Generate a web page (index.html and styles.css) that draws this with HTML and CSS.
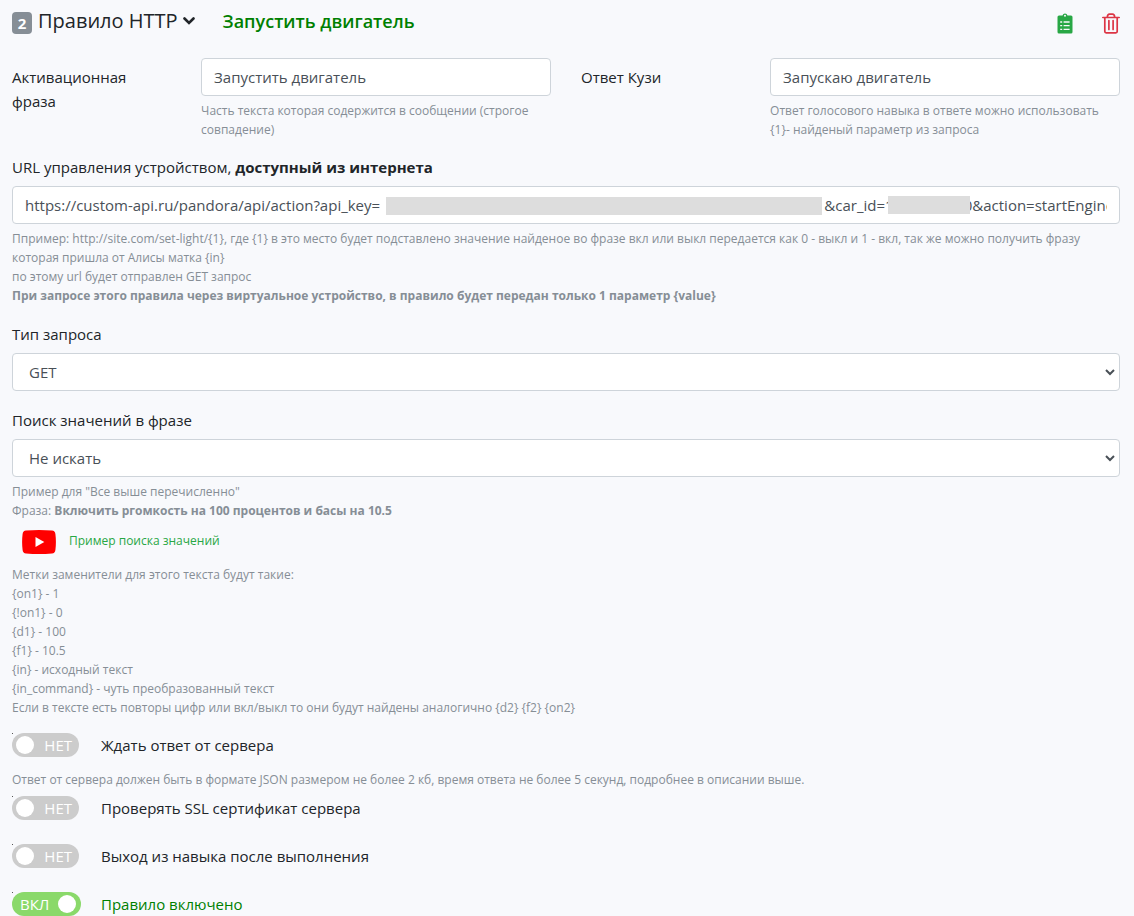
FILE: index.html
```html
<!DOCTYPE html>
<html lang="ru">
<head>
<meta charset="utf-8">
<meta name="viewport" content="width=device-width, initial-scale=1">
<title>Правило HTTP</title>
<link rel="stylesheet" href="styles.css">
</head>
<body>
<form class="rule">
  <header class="rule-head">
    <span class="badge">2</span>
    <button class="rule-type" type="button">Правило HTTP
      <svg width="12" height="8" viewBox="0 0 12 8"><path d="M1.5 1.5 6 6l4.500-4.500" fill="none" stroke="currentColor" stroke-width="2.600" stroke-linecap="round"/></svg>
    </button>
    <h2 class="rule-name">Запустить двигатель</h2>
    <button class="icon-btn copy" type="button" aria-label="Копировать">
      <svg width="16" height="21" viewBox="0 0 16 21"><path fill="currentColor" fill-rule="evenodd" d="M2 2.500h3.500a2.600 2.600 0 0 1 5 0H14a1.500 1.500 0 0 1 1.500 1.500v15a1.500 1.500 0 0 1-1.500 1.500H2A1.500 1.500 0 0 1 .5 19V4A1.500 1.500 0 0 1 2 2.500zM8 1.800a1 1 0 1 0 0 2 1 1 0 0 0 0-2z"/><path d="M3.200 9h2M6.600 9h6M3.200 12.700h2M6.600 12.700h6M3.200 16.400h2M6.600 16.400h6" stroke="#f8f9fa" stroke-width="1.300"/></svg>
    </button>
    <button class="icon-btn trash" type="button" aria-label="Удалить">
      <svg width="18" height="21" viewBox="0 0 18 21"><path d="M.8 4.500h16.400M2.800 4.500v14a1.300 1.300 0 0 0 1.300 1.300h9.800a1.300 1.300 0 0 0 1.300-1.300v-14M5.300 4.200C5.500 2 6.500 1.200 7.500 1.200h3c1 0 2 .8 2.200 3M6.900 7.500v9M11.100 7.500v9" fill="none" stroke="currentColor" stroke-width="1.700" stroke-linecap="round"/></svg>
    </button>
  </header>

  <div class="pair">
    <label class="side-label" for="phrase">Активационная фраза</label>
    <div>
      <input class="control" id="phrase" type="text" value="Запустить двигатель">
      <p class="help">Часть текста которая содержится в сообщении (строгое совпадение)</p>
    </div>
    <label class="side-label" for="answer">Ответ Кузи</label>
    <div>
      <input class="control" id="answer" type="text" value="Запускаю двигатель">
      <p class="help">Ответ голосового навыка в ответе можно использовать {1}- найденый параметр из запроса</p>
    </div>
  </div>

  <div class="group">
    <label for="url">URL управления устройством, <b>доступный из интернета</b></label>
    <div class="masked">
      <input class="control" id="url" type="text" value="https://custom-api.ru/pandora/api/action?api_key=&nbsp;&nbsp;&nbsp;&nbsp;&nbsp;&nbsp;&nbsp;&nbsp;&nbsp;&nbsp;&nbsp;&nbsp;&nbsp;&nbsp;&nbsp;&nbsp;&nbsp;&nbsp;&nbsp;&nbsp;&nbsp;&nbsp;&nbsp;&nbsp;&nbsp;&nbsp;&nbsp;&nbsp;&nbsp;&nbsp;&nbsp;&nbsp;&nbsp;&nbsp;&nbsp;&nbsp;&nbsp;&nbsp;&nbsp;&nbsp;&nbsp;&nbsp;&nbsp;&nbsp;&nbsp;&nbsp;&nbsp;&nbsp;&nbsp;&nbsp;&nbsp;&nbsp;&nbsp;&nbsp;&nbsp;&nbsp;&nbsp;&nbsp;&nbsp;&nbsp;&nbsp;&nbsp;&nbsp;&nbsp;&nbsp;&nbsp;&nbsp;&nbsp;&nbsp;&nbsp;&nbsp;&nbsp;&nbsp;&nbsp;&nbsp;&nbsp;&nbsp;&nbsp;&nbsp;&nbsp;&nbsp;&nbsp;&nbsp;&nbsp;&nbsp;&nbsp;&nbsp;&nbsp;&nbsp;&nbsp;&nbsp;&nbsp;&nbsp;&nbsp;&nbsp;&nbsp;&nbsp;&nbsp;&nbsp;&nbsp;&nbsp;&nbsp;&nbsp;&nbsp;&nbsp;&nbsp;&nbsp;&nbsp;&nbsp;&nbsp;&nbsp;&nbsp;&nbsp;&nbsp;&amp;car_id=1&nbsp;&nbsp;&nbsp;&nbsp;&nbsp;&nbsp;&nbsp;&nbsp;&nbsp;&nbsp;&nbsp;&nbsp;&nbsp;&nbsp;&nbsp;&nbsp;&nbsp;&nbsp;0&amp;action=startEngine">
      <span class="mask mask-key"></span>
      <span class="mask mask-car"></span>
    </div>
    <p class="help">Ппример: http://site.com/set-light/{1}, где {1} в это место будет подставлено значение найденое во фразе вкл или выкл передается как 0 - выкл и 1 - вкл, так же можно получить фразу которая пришла от Алисы матка {in}<br>по этому url будет отправлен GET запрос<br><b>При запросе этого правила через виртуальное устройство, в правило будет передан только 1 параметр {value}</b></p>
  </div>

  <div class="group">
    <label for="method">Тип запроса</label>
    <div class="select">
      <select class="control" id="method"><option>GET</option><option>POST</option></select>
      <svg class="arrow" width="10" height="7" viewBox="0 0 10 7"><path d="M1 1l4 4 4-4" fill="none" stroke="#495057" stroke-width="2"/></svg>
    </div>
  </div>

  <div class="group">
    <label for="search">Поиск значений в фразе</label>
    <div class="select">
      <select class="control" id="search"><option>Не искать</option></select>
      <svg class="arrow" width="10" height="7" viewBox="0 0 10 7"><path d="M1 1l4 4 4-4" fill="none" stroke="#495057" stroke-width="2"/></svg>
    </div>
    <p class="help">Пример для "Все выше перечисленно"<br>Фраза: <b>Включить ргомкость на 100 процентов и басы на 10.5</b></p>
    <a class="video" href="#">
      <svg width="34" height="24" viewBox="0 0 34 24"><path fill="#f00" d="M4 .5Q17-.5 30 .5q3 .3 3.400 3.500 1 8 0 16-.4 3.200-3.400 3.500-13 1-26 0Q1 23.200.6 20q-1-8 0-16Q1 .8 4 .5z"/><path fill="#fff" d="M13.500 7v10l8.800-5z"/></svg>
      Пример поиска значений
    </a>
    <p class="help tags">Метки заменители для этого текста будут такие:<br>{on1} - 1<br>{!on1} - 0<br>{d1} - 100<br>{f1} - 10.5<br>{in} - исходный текст<br>{in_command} - чуть преобразованный текст<br>Если в тексте есть повторы цифр или вкл/выкл то они будут найдены аналогично {d2} {f2} {on2}</p>
  </div>

  <div class="switches">
    <div>
      <label class="switch"><input type="checkbox"><span class="track"></span>Ждать ответ от сервера</label>
      <p class="help server-help">Ответ от сервера должен быть в формате JSON размером не более 2 кб, время ответа не более 5 секунд, подробнее в описании выше.</p>
    </div>
    <label class="switch"><input type="checkbox"><span class="track"></span>Проверять SSL сертификат сервера</label>
    <label class="switch"><input type="checkbox"><span class="track"></span>Выход из навыка после выполнения</label>
    <label class="switch enabled"><input type="checkbox" checked><span class="track"></span>Правило включено</label>
  </div>
</form>
</body>
</html>
```
FILE: styles.css
```css
* { box-sizing: border-box; }
body {
  margin: 0;
  background: #f8f9fc;
  color: #212529;
  font: 15px/24px "Open Sans", "Noto Sans", sans-serif;
}
.rule { padding: 8px 14px 0 12px; }
p, h2 { margin: 0; }
button { border: 0; padding: 0; background: none; font: inherit; color: inherit; }

.rule-head { display: flex; align-items: center; height: 26px; }
.badge {
  width: 20px;
  height: 22px;
  margin: 4px 6px 0 0;
  border-radius: 4px;
  background: #868e96;
  color: #fff;
  font-weight: 700;
  line-height: 22px;
  text-align: center;
}
.rule-type { display: flex; align-items: center; gap: 5px; font-size: 19px; font-weight: 500; }
.rule-type { font-size: 20px; }
.rule-name { margin-left: 28px; color: #008000; font-size: 18px; font-weight: 600; }
.icon-btn { display: flex; margin-top: 4px; }
.copy { margin-left: auto; color: #28a745; }
.trash { margin-left: 29px; color: #dc3545; }

.pair { display: grid; grid-template-columns: 5fr 11fr 5fr 11fr; column-gap: 30px; margin-top: 24px; }
.side-label { padding-top: 7px; }
.control {
  display: block;
  width: 100%;
  height: 38px;
  padding: 6px 12px;
  border: 1px solid #ced4da;
  border-radius: 4px;
  background: #fff;
  color: #495057;
  font: inherit;
}
.help { margin-top: 5px; color: #868e96; font-size: 12px; line-height: 19px; }

.group { margin-top: 16px; }
.group + .group { margin-top: 17px; }
.group > label { display: block; margin-bottom: 7px; }
.masked, .select { position: relative; }
.mask { position: absolute; height: 18px; background: #ddd; }
.mask-key { left: 374px; top: 11px; width: 436px; }
.mask-car { left: 876px; top: 10px; width: 82px; }
select.control { appearance: none; padding-left: 16px; }
.arrow { position: absolute; right: 5px; top: 16px; pointer-events: none; }

.video {
  display: flex;
  gap: 13px;
  margin: 10px 0 0 10px;
  color: #28a745;
  font-size: 12px;
  line-height: 22px;
  text-decoration: none;
}
.tags { margin-top: 11px; }

.switches { display: grid; gap: 24px; margin-top: 16px; }
.switch { position: relative; display: flex; align-items: center; gap: 22px; height: 24px; }
.switch input {
  position: absolute;
  left: 0;
  top: 0;
  width: 1px;
  height: 1px;
  margin: 0;
  appearance: none;
  background: #555;
}
.track {
  display: flex;
  align-items: center;
  justify-content: space-between;
  width: 67px;
  height: 24px;
  padding: 0 7px 0 4px;
  border-radius: 12px;
  background: #ccc;
  color: #fff;
  font-size: 15px;
  font-weight: 500;
}
.track::before { content: ""; width: 18px; height: 18px; border-radius: 50%; background: #fff; }
.track::after { content: "НЕТ"; }
.enabled { gap: 20px; color: #008000; }
.switch input:checked + .track { flex-direction: row-reverse; width: 69px; padding: 0 5px 0 8px; background: #8ad96a; }
.switch input:checked + .track::after { content: "ВКЛ"; }
.server-help { margin: 13px 0 -17px; }
```
